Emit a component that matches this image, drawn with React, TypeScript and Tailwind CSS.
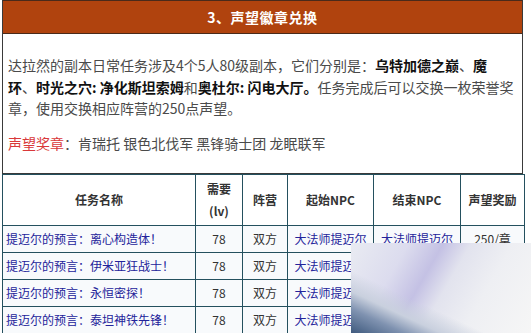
const rows = [
  "提迈尔的预言：离心构造体！",
  "提迈尔的预言：伊米亚狂战士！",
  "提迈尔的预言：永恒密探！",
  "提迈尔的预言：泰坦神铁先锋！",
];

export default function App() {
  return (
    <div
      className="relative w-[531px] h-[333px] overflow-hidden bg-white pl-[2px]"
      style={{ fontFamily: '"Noto Sans CJK SC", "Noto Sans", sans-serif' }}
    >
      {/* 标题框 */}
      <div className="w-[521px] border border-t-0 border-[#3a3a3a]">
        <div className="h-[34px] bg-[#b0430e] border-t border-b border-[#4a2a1a] flex items-center justify-center">
          <span className="text-white font-bold text-[14px] tracking-[0.5px]">3、声望徽章兑换</span>
        </div>
        <div className="pl-[5px] pr-[4px] pt-[21px] pb-[19px] text-[14px] leading-[21.5px] text-[#4a4a4a]">
          <p className="whitespace-nowrap">
            达拉然的副本日常任务涉及4个5人80级副本，它们分别是：
            <b className="text-[#111]">乌特加德之巅</b>、<b className="text-[#111]">魔</b>
            <br />
            <b className="text-[#111]">环</b>、<b className="text-[#111]">时光之穴: 净化斯坦索姆</b>和
            <b className="text-[#111]">奥杜尔: 闪电大厅。</b>任务完成后可以交换一枚荣誉奖
            <br />
            章，使用交换相应阵营的250点声望。
          </p>
          <p className="mt-[13px]">
            <span className="text-[#d9383a]">声望奖章</span>：肯瑞托 银色北伐军 黑锋骑士团 龙眠联军
          </p>
        </div>
      </div>

      {/* 任务表 */}
      <table className="w-[522px] table-fixed border-collapse text-[12px] text-[#333]">
        <colgroup>
          <col className="w-[193px]" />
          <col className="w-[47px]" />
          <col className="w-[45px]" />
          <col className="w-[86px]" />
          <col className="w-[87px]" />
          <col className="w-[64px]" />
        </colgroup>
        <thead>
          <tr className="h-[51px] bg-white text-[#333]">
            <th className="border border-[#24505e] font-semibold">任务名称</th>
            <th className="border border-[#24505e] font-semibold leading-[22px]">需要<br />(lv)</th>
            <th className="border border-[#24505e] font-semibold">阵营</th>
            <th className="border border-[#24505e] font-semibold">起始NPC</th>
            <th className="border border-[#24505e] font-semibold">结束NPC</th>
            <th className="border border-[#24505e] font-semibold">声望奖励</th>
          </tr>
        </thead>
        <tbody className="bg-[#f8fafc]">
          {rows.map((r) => (
            <tr key={r} className="h-[27px]">
              <td className="border border-[#24505e] pl-[3px] text-[#23239a] whitespace-nowrap">{r}</td>
              <td className="border border-[#24505e] text-center">78</td>
              <td className="border border-[#24505e] text-center">双方</td>
              <td className="border border-[#24505e] text-center text-[#23239a] whitespace-nowrap overflow-hidden">大法师提迈尔</td>
              <td className="border border-[#24505e] text-center text-[#23239a] whitespace-nowrap overflow-hidden">大法师提迈尔</td>
              <td className="border border-[#24505e] text-center whitespace-nowrap overflow-hidden">250/章</td>
            </tr>
          ))}
        </tbody>
      </table>

      {/* 右下角模糊遮挡图 */}
      <div className="absolute left-[351px] top-[243px] w-[180px] h-[90px] bg-[linear-gradient(25deg,#3f5a7e_0%,#7f92b0_14%,#c9d0de_24%,transparent_36%),linear-gradient(120deg,#e9ebf2_0%,#dcdcee_25%,#c4c1e4_40%,#e2e3ee_52%,#eeeff3_70%,#f6f6f6_100%)]" />
    </div>
  );
}
